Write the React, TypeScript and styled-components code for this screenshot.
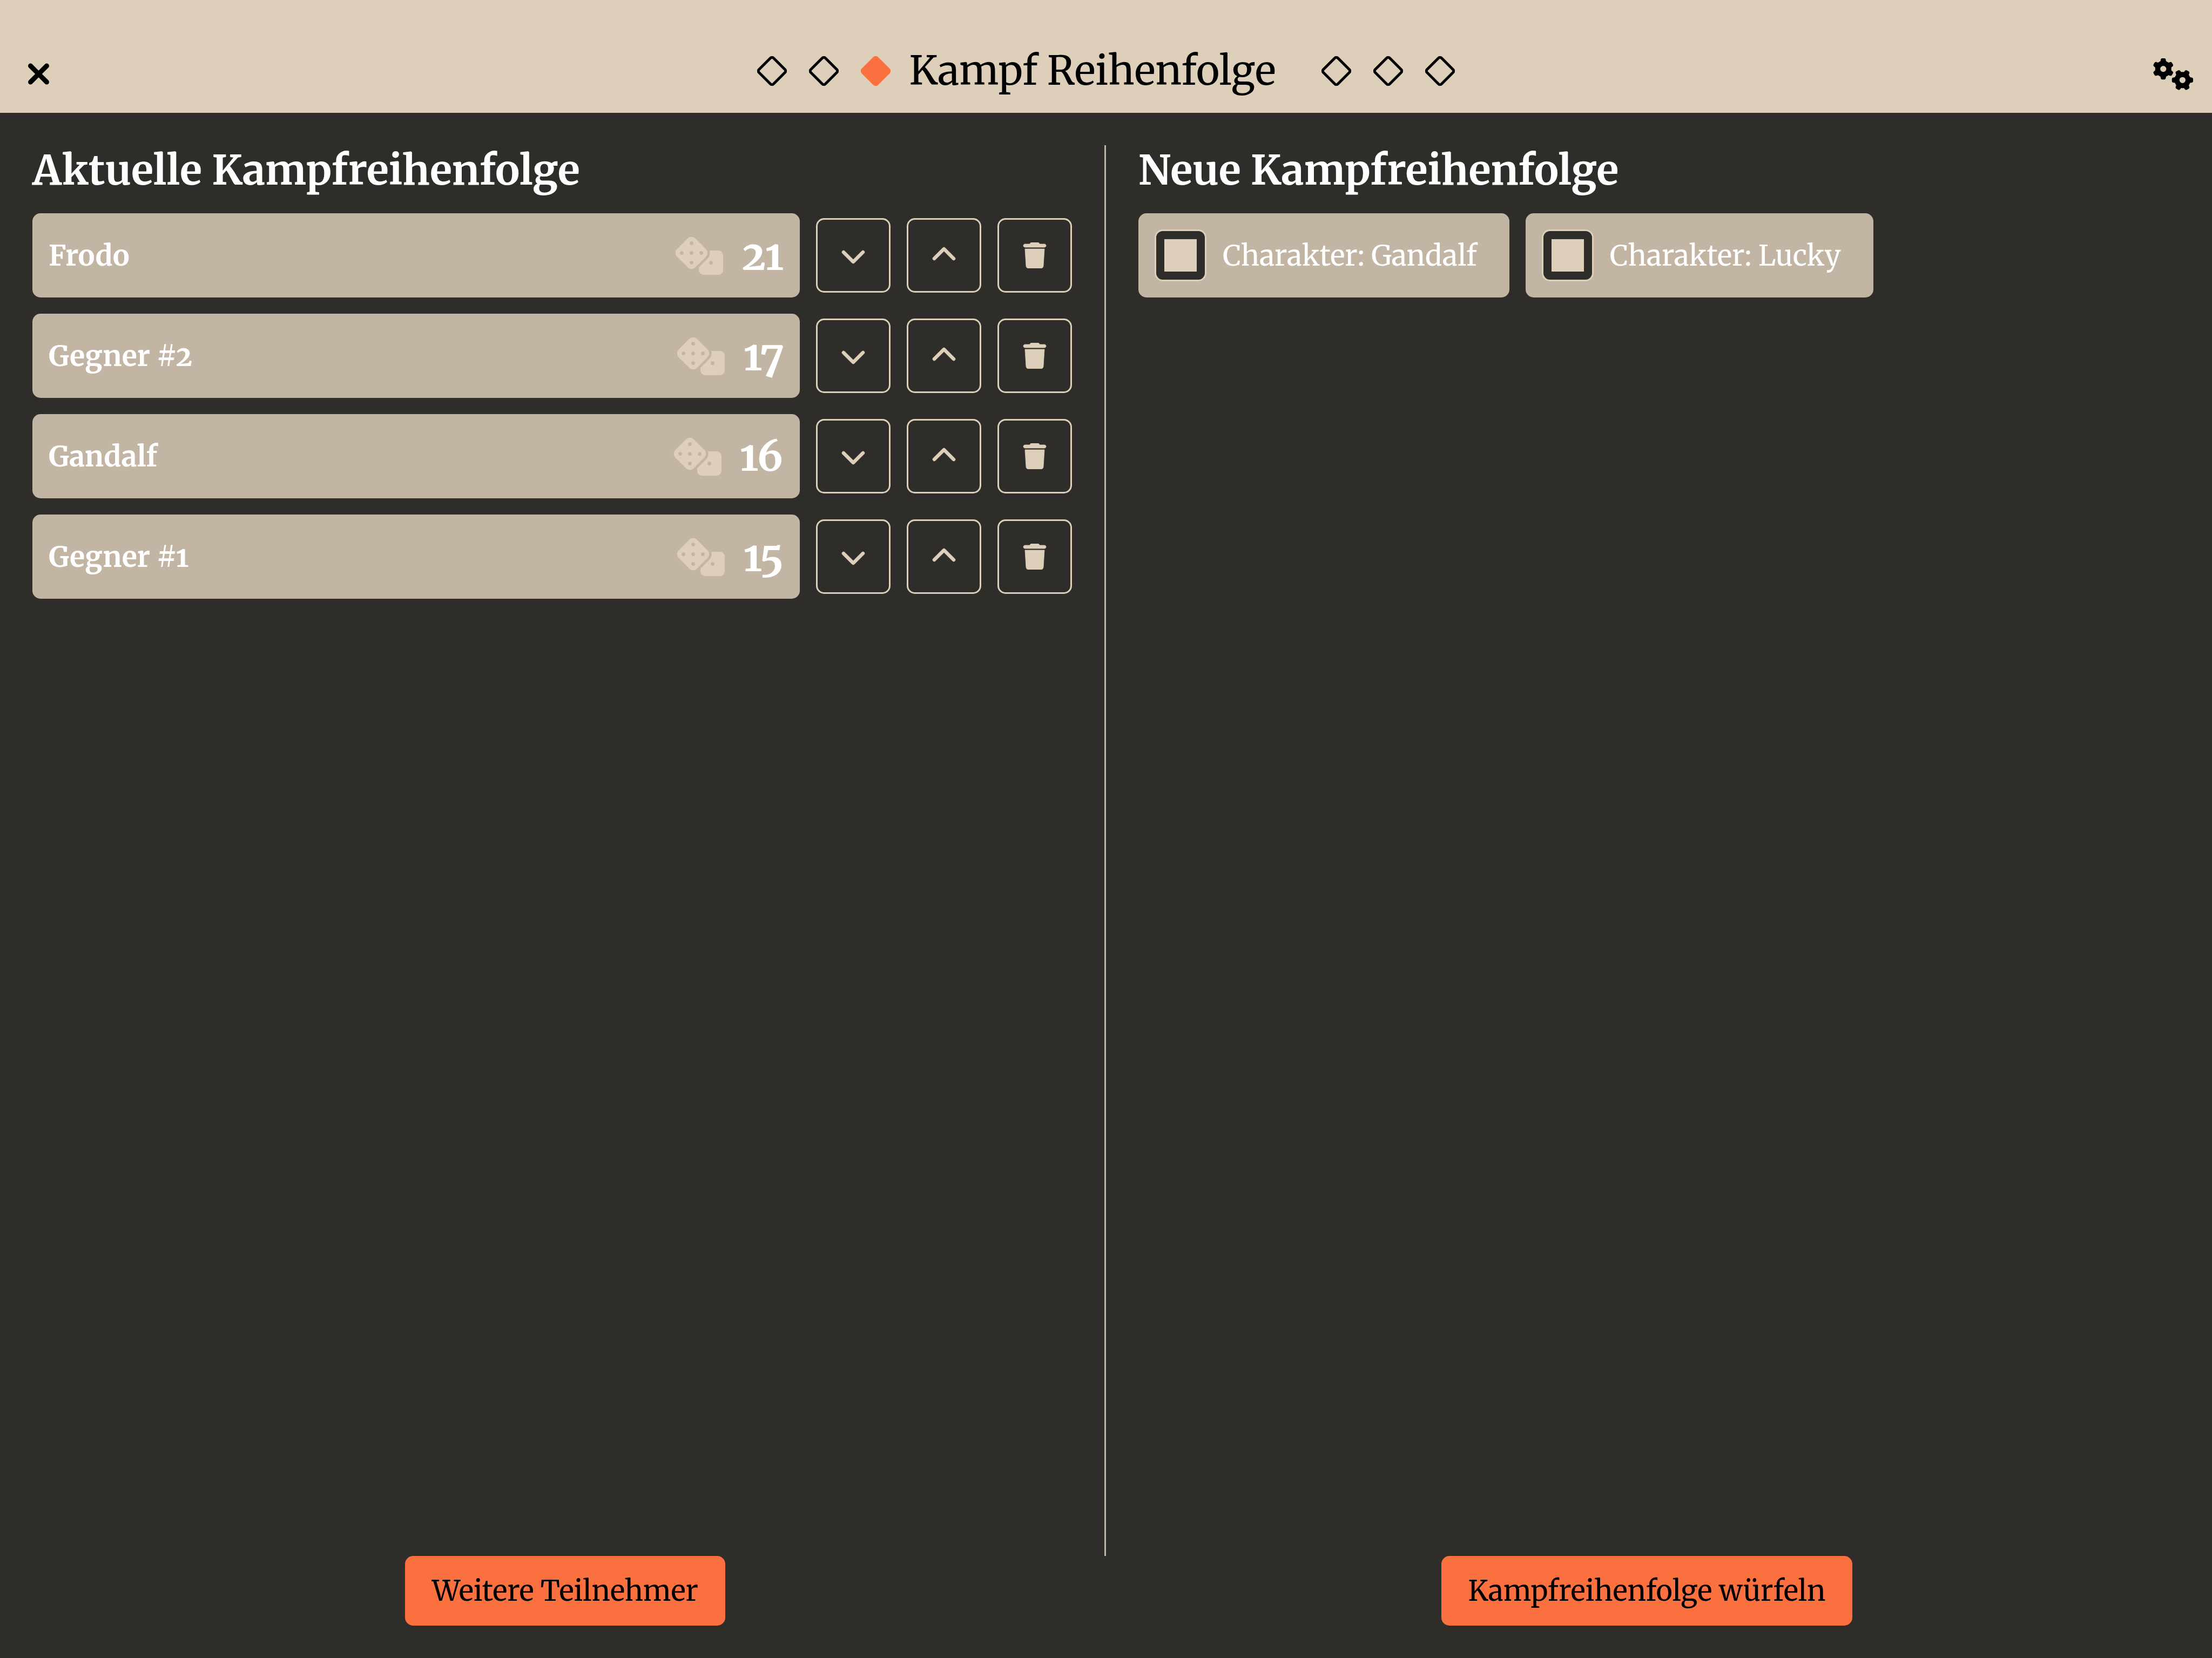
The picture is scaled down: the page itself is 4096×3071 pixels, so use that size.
import React, { useState } from 'react';
import styled, { createGlobalStyle, css } from 'styled-components';
import {
  FaChevronDown,
  FaChevronUp,
  FaDice,
  FaGears,
  FaTrash,
  FaXmark,
} from 'react-icons/fa6';

const color = {
  sand: '#decfbb',
  card: '#c2b5a4',
  dark: '#2f2d29',
  accent: '#fa703f',
};

const GlobalStyle = createGlobalStyle`
  *, *::before, *::after { box-sizing: border-box; }
  body {
    margin: 0;
    background: ${color.dark};
    color: #fff;
    font-family: Merriweather, "Noto Serif", "DejaVu Serif Condensed", serif;
    font-size: 52px;
    font-variant-numeric: oldstyle-nums;
  }
`;

const resetButton = css`
  margin: 0;
  padding: 0;
  border: 0;
  background: none;
  color: inherit;
  font: inherit;
  cursor: pointer;
`;

const Page = styled.div`
  display: flex;
  flex-direction: column;
  min-height: 100vh;
`;

const Header = styled.header`
  display: grid;
  grid-template-columns: 1fr auto 1fr;
  align-items: center;
  padding: 65px 34px 0;
  background: ${color.sand};
  color: #000;
`;

const HeaderButton = styled.button<{ $end?: boolean }>`
  ${resetButton}
  justify-self: ${(p) => (p.$end ? 'end' : 'start')};
  display: flex;

  svg {
    width: 75px;
    height: 60px;
    stroke-width: ${(p) => (p.$end ? 0 : 12)};
  }
`;

const TitleBar = styled.div`
  display: flex;
  align-items: center;
  height: 144px;
  padding-bottom: 12px;
`;

const Title = styled.h1`
  margin: 0 84px 0 34px;
  font-size: 74px;
  font-weight: 400;
  line-height: 92px;
  white-space: nowrap;
`;

const Steps = styled.div`
  display: flex;
  gap: 41px;
`;

const StepIcon = styled.svg<{ $active?: boolean }>`
  width: 55px;
  height: 55px;
  fill: ${(p) => (p.$active ? color.accent : 'none')};
  stroke: ${(p) => (p.$active ? color.accent : '#000')};
  stroke-width: 5;
`;

const Columns = styled.main`
  display: grid;
  grid-template-columns: 1fr 1fr;
  flex: 1;
  padding-top: 60px;
`;

const Column = styled.section<{ $divided?: boolean }>`
  min-width: 0;
  padding: 0 60px;
  border-right: ${(p) => (p.$divided ? `3px solid ${color.card}` : '0')};
`;

const Heading = styled.h2`
  margin: 0 0 34px;
  font-size: 76px;
  font-weight: 700;
  line-height: 92px;
`;

const List = styled.ul<{ $inline?: boolean }>`
  display: flex;
  flex-flow: ${(p) => (p.$inline ? 'row wrap' : 'column')};
  gap: 30px;
  margin: 0;
  padding: 0;
  list-style: none;
`;

const Row = styled.li`
  display: flex;
  align-items: center;
  gap: 30px;
`;

const Combatant = styled.div`
  display: flex;
  flex: 1;
  align-items: center;
  gap: 34px;
  height: 156px;
  padding: 0 30px;
  border-radius: 15px;
  background: ${color.card};
  font-weight: 700;

  svg {
    width: 90px;
    height: 72px;
    color: ${color.sand};
  }
`;

const Name = styled.span`
  flex: 1;
`;

const Score = styled.span`
  font-size: 76px;
  line-height: 92px;
`;

const IconButton = styled.button`
  ${resetButton}
  display: flex;
  align-items: center;
  justify-content: center;
  width: 138px;
  height: 138px;
  border: 3px solid ${color.sand};
  border-radius: 15px;
  color: ${color.sand};

  svg {
    width: 48px;
    height: 48px;
    stroke-width: 8;
  }
`;

const Choice = styled.label`
  display: flex;
  align-items: center;
  gap: 30px;
  height: 156px;
  padding: 0 60px 0 30px;
  border-radius: 15px;
  background: ${color.card};
  white-space: nowrap;
  cursor: pointer;
`;

const Checkbox = styled.input`
  appearance: none;
  width: 96px;
  height: 96px;
  margin: 0;
  padding: 15px;
  border: 3px solid ${color.sand};
  border-radius: 15px;
  background: ${color.dark};

  &:checked {
    background: linear-gradient(${color.sand}, ${color.sand}) content-box, ${color.dark};
  }
`;

const Footer = styled.footer`
  display: grid;
  grid-template-columns: 1fr 1fr;
  gap: 30px;
  justify-items: center;
  padding: 0 60px 60px;
`;

const ActionButton = styled.button`
  ${resetButton}
  height: 129px;
  padding: 0 50px;
  border-radius: 15px;
  background: ${color.accent};
  color: #000;
`;

const Step = ({ active }: { active?: boolean }) => (
  <StepIcon $active={active} viewBox="0 0 55 55" aria-hidden="true">
    <rect x="8.5" y="8.5" width="38" height="38" rx="4" transform="rotate(45 27.5 27.5)" />
  </StepIcon>
);

const combatants = [
  { name: 'Frodo', score: 21 },
  { name: 'Gegner #2', score: 17 },
  { name: 'Gandalf', score: 16 },
  { name: 'Gegner #1', score: 15 },
];

const characters = ['Gandalf', 'Lucky'];

export default function App() {
  const [selected, setSelected] = useState<string[]>(characters);

  const toggle = (name: string) =>
    setSelected((current) =>
      current.includes(name) ? current.filter((n) => n !== name) : [...current, name],
    );

  return (
    <>
      <GlobalStyle />
      <Page>
        <Header>
          <HeaderButton type="button" aria-label="Schließen">
            <FaXmark />
          </HeaderButton>
          <TitleBar>
            <Steps>
              <Step />
              <Step />
              <Step active />
            </Steps>
            <Title>Kampf Reihenfolge</Title>
            <Steps>
              <Step />
              <Step />
              <Step />
            </Steps>
          </TitleBar>
          <HeaderButton type="button" aria-label="Einstellungen" $end>
            <FaGears />
          </HeaderButton>
        </Header>

        <Columns>
          <Column $divided>
            <Heading>Aktuelle Kampfreihenfolge</Heading>
            <List>
              {combatants.map(({ name, score }) => (
                <Row key={name}>
                  <Combatant>
                    <Name>{name}</Name>
                    <FaDice />
                    <Score>{score}</Score>
                  </Combatant>
                  <IconButton type="button" aria-label={`${name} nach unten`}>
                    <FaChevronDown />
                  </IconButton>
                  <IconButton type="button" aria-label={`${name} nach oben`}>
                    <FaChevronUp />
                  </IconButton>
                  <IconButton type="button" aria-label={`${name} entfernen`}>
                    <FaTrash />
                  </IconButton>
                </Row>
              ))}
            </List>
          </Column>

          <Column>
            <Heading>Neue Kampfreihenfolge</Heading>
            <List $inline>
              {characters.map((name) => (
                <li key={name}>
                  <Choice>
                    <Checkbox
                      type="checkbox"
                      checked={selected.includes(name)}
                      onChange={() => toggle(name)}
                    />
                    <span>Charakter: {name}</span>
                  </Choice>
                </li>
              ))}
            </List>
          </Column>
        </Columns>

        <Footer>
          <ActionButton type="button">Weitere Teilnehmer</ActionButton>
          <ActionButton type="button">Kampfreihenfolge würfeln</ActionButton>
        </Footer>
      </Page>
    </>
  );
}
